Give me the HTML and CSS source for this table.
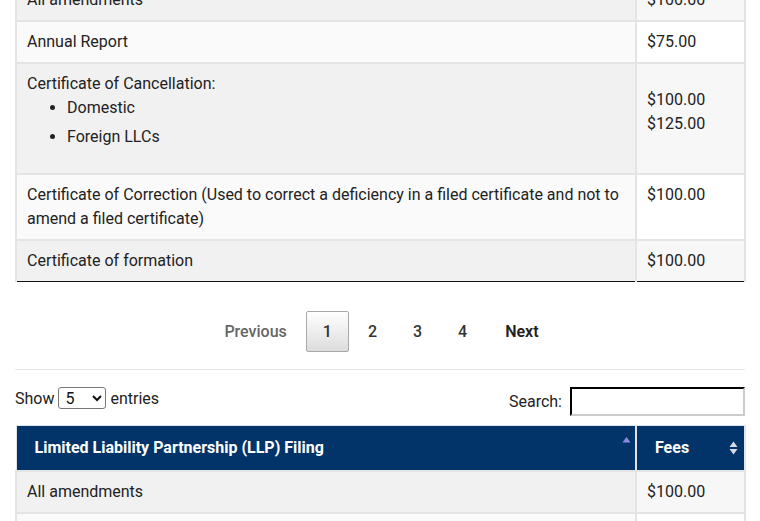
FILE: index.html
```html
<!DOCTYPE html>
<html lang="en">
<head>
  <meta charset="UTF-8" />
  <meta name="viewport" content="width=device-width, initial-scale=1.0"/>
  <title>LLC and LLP Filing Fees</title>
  <link rel="stylesheet" href="styles.css">
</head>
<body>

<div class="page">
  <table class="fees first">
    <colgroup>
      <col class="col-name" />
      <col class="col-fee" />
    </colgroup>
    <tbody>
      <tr class="odd">
        <td>All amendments</td>
        <td>$100.00</td>
      </tr>
      <tr class="even">
        <td>Annual Report</td>
        <td>$75.00</td>
      </tr>
      <tr class="odd">
        <td>
          Certificate of Cancellation:
          <ul>
            <li>Domestic</li>
            <li>Foreign LLCs</li>
          </ul>
        </td>
        <td class="fee-multi">$100.00<br>$125.00</td>
      </tr>
      <tr class="even">
        <td>Certificate of Correction (Used to correct a deficiency in a filed certificate and not to amend a filed certificate)</td>
        <td>$100.00</td>
      </tr>
      <tr class="odd last">
        <td>Certificate of formation</td>
        <td>$100.00</td>
      </tr>
    </tbody>
  </table>

  <div class="paginate">
    <a class="page-btn disabled">Previous</a>
    <a class="page-btn current">1</a>
    <a class="page-btn">2</a>
    <a class="page-btn">3</a>
    <a class="page-btn">4</a>
    <a class="page-btn next">Next</a>
  </div>

  <hr class="divider" />

  <div class="controls">
    <label class="length">Show
      <select>
        <option>5</option>
        <option>10</option>
        <option>25</option>
      </select>
      entries</label>
    <label class="search">Search: <input type="search" /></label>
  </div>

  <table class="fees">
    <colgroup>
      <col class="col-name" />
      <col class="col-fee" />
    </colgroup>
    <thead>
      <tr>
        <th>
          <div class="th-inner">
            <span>Limited Liability Partnership (LLP) Filing</span>
            <svg class="sort" width="9" height="16" viewBox="0 0 9 16"><path d="M0.5 6.5 L4.5 1 L8.5 6.5 Z" fill="#8c8fdc"/></svg>
          </div>
        </th>
        <th>
          <div class="th-inner">
            <span>Fees</span>
            <svg class="sort" width="9" height="16" viewBox="0 0 9 16"><path d="M0.5 7 L4.5 1.5 L8.5 7 Z M0.5 9 L4.5 14.5 L8.5 9 Z" fill="#d8dbe6"/></svg>
          </div>
        </th>
      </tr>
    </thead>
    <tbody>
      <tr class="odd">
        <td>All amendments</td>
        <td>$100.00</td>
      </tr>
      <tr class="even">
        <td>Annual Report</td>
        <td>$75.00</td>
      </tr>
    </tbody>
  </table>
</div>

</body>
</html>
```

FILE: styles.css
```css
body {
  margin: 0;
  font-family: Roboto, "Liberation Sans", sans-serif;
  color: #222;
  background: #fff;
}
.page {
  padding: 0 14px 0 15px;
}
.fees {
  width: 731px;
  border-collapse: collapse;
  table-layout: fixed;
  font-size: 16px;
  line-height: 24px;
}
.fees.first {
  margin-top: -22px;
}
.col-fee {
  width: 109px;
}
.fees td {
  padding: 8px 9px 8px 10px;
  border: 2px solid #e4e4e4;
  vertical-align: top;
}
.fees tr.odd td:first-child { background: #f1f1f1; }
.fees tr.odd td:last-child { background: #f7f7f7; }
.fees tr.even td:first-child { background: #fafafa; }
.fees tr.even td:last-child { background: #fff; }
.fees tr.last td {
  border-bottom: 1px solid #111;
}
.fees ul {
  margin: 0 0 16px;
  padding-left: 40px;
}
.fees li {
  margin-top: 0;
  margin-bottom: 5px;
}
.fees td.fee-multi {
  padding-top: 24px;
}
.fees thead th {
  background: #02346a;
  color: #fff;
  font-weight: bold;
  text-align: left;
  padding: 10px 6px 10px 18px;
  border-top: 1px solid #dfe3ea;
  border-left: 1px solid #dfe3ea;
  border-right: 2px solid #dfe3ea;
  font-size: 16px;
}
.fees thead th:first-child {
  padding-right: 4px;
}
.th-inner {
  display: flex;
  justify-content: space-between;
  align-items: center;
}
.sort {
  display: block;
  margin-top: -8px;
}
.fees thead th:last-child .sort {
  margin-top: 0;
}
.paginate {
  display: flex;
  justify-content: center;
  align-items: center;
  margin-top: 29px;
  font-size: 16px;
  font-weight: 500;
}
.page-btn {
  padding: 8px 16px;
  margin-left: 2px;
  line-height: 23px;
  border: 1px solid transparent;
  border-radius: 2px;
  color: #333;
  min-width: 9px;
  text-align: center;
  cursor: pointer;
}
.page-btn.disabled {
  color: #666;
}
.page-btn.current {
  border: 1px solid #a9a9a9;
  background: linear-gradient(to bottom, #fff 0%, #dcdcdc 100%);
  color: #333;
}
.page-btn.next {
  color: #222;
  font-weight: 600;
  margin-left: 4px;
}
.divider {
  border: none;
  border-top: 1px solid #e6e6e6;
  margin: 17px 1px 0 0;
}
.controls {
  display: flex;
  justify-content: space-between;
  align-items: flex-start;
  margin-top: 17px;
  margin-bottom: 9px;
  font-size: 16px;
}
.length {
  display: flex;
  align-items: center;
  gap: 4px;
  height: 22px;
}
.length select {
  width: 48px;
  height: 22px;
  font-size: 16px;
  font-family: Roboto, "Liberation Sans", sans-serif;
  border: 1px solid #777;
  border-radius: 3px;
  background: #fff;
  color: #111;
  padding: 0 2px;
}
.search {
  display: flex;
  align-items: center;
  gap: 8px;
  margin-right: 1px;
}
.search input {
  padding: 0 2px;
  border: 2px inset #ccc;
  border-top-color: #222;
  border-left-color: #222;
  box-sizing: border-box;
  height: 29px;
  width: 175px;
}
```
